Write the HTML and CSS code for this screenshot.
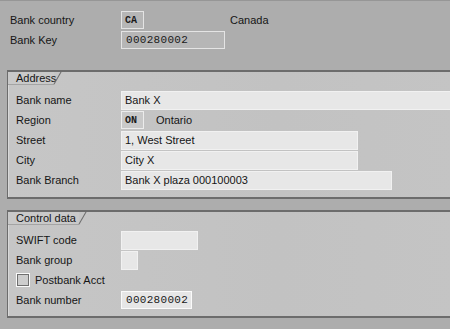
FILE: index.html
```html
<!DOCTYPE html>
<html>
<head>
<meta charset="utf-8">
<link rel="stylesheet" href="styles.css">
</head>
<body>
<div class="screen">
  <div class="header">
    <div class="row">
      <span class="label top-label">Bank country</span>
      <span class="field code dim w-code">CA</span>
      <span class="desc">Canada</span>
    </div>
    <div class="row">
      <span class="label top-label">Bank Key</span>
      <span class="field num dim w-key">000280002</span>
    </div>
  </div>

  <section class="group group-address">
    <div class="tab">Address</div>
    <div class="rows">
      <div class="row">
        <span class="label">Bank name</span>
        <span class="field text w-full">Bank X</span>
      </div>
      <div class="row">
        <span class="label">Region</span>
        <span class="field code mid w-code">ON</span>
        <span class="desc-region">Ontario</span>
      </div>
      <div class="row">
        <span class="label">Street</span>
        <span class="field text w-street">1, West Street</span>
      </div>
      <div class="row">
        <span class="label">City</span>
        <span class="field text w-street">City X</span>
      </div>
      <div class="row">
        <span class="label">Bank Branch</span>
        <span class="field text w-branch">Bank X plaza 000100003</span>
      </div>
    </div>
  </section>

  <section class="group group-control">
    <div class="tab">Control data</div>
    <div class="rows">
      <div class="row">
        <span class="label">SWIFT code</span>
        <span class="field text w-swift"></span>
      </div>
      <div class="row">
        <span class="label">Bank group</span>
        <span class="field text w-group"></span>
      </div>
      <div class="row">
        <span class="check"></span>
        <span class="check-label">Postbank Acct</span>
      </div>
      <div class="row">
        <span class="label">Bank number</span>
        <span class="field num bright w-num">000280002</span>
      </div>
    </div>
  </section>
</div>
</body>
</html>
```

FILE: styles.css
```css
* { box-sizing: border-box; }

html, body {
  margin: 0;
  padding: 0;
}

body {
  width: 450px;
  height: 329px;
  overflow: hidden;
  background: #adadad;
  font-family: "Liberation Sans", Arial, sans-serif;
  font-size: 11px;
  color: #151515;
}

.screen {
  border-top: 1px solid #969696;
  height: 329px;
}

.header {
  padding: 9px 0 0 10px;
}

.row {
  display: flex;
  align-items: center;
  height: 20px;
}

.label {
  width: 105px;
  flex: none;
}

.top-label {
  width: 111px;
}

.field {
  flex: none;
  height: 19px;
  display: flex;
  align-items: center;
  padding-left: 3px;
  white-space: nowrap;
  overflow: hidden;
}

.field.dim {
  height: 18px;
  background: #b6b6b6;
  border: 1px solid #e4e4e4;
}

.field.mid {
  height: 18px;
  background: #c9c9c9;
  border: 1px solid #ececec;
}

.field.text {
  background: #e7e7e7;
  border: 1px solid #f1f1f1;
}

.field.bright {
  height: 18px;
  background: #e6e6e6;
  border: 1px solid #fafafa;
}

.code {
  font-family: "Liberation Mono", "Courier New", monospace;
  font-weight: bold;
  font-size: 10px;
  color: #1a1a1a;
}

.num {
  font-family: "Liberation Mono", "Courier New", monospace;
  font-size: 11px;
  letter-spacing: 0.3px;
  color: #1a1a1a;
  padding-left: 4px;
}

.w-code { width: 23px; }
.w-key { width: 104px; }
.w-full { width: 340px; }
.w-street { width: 237px; }
.w-branch { width: 271px; }
.w-swift { width: 77px; }
.w-group { width: 17px; }
.w-num { width: 71px; }

.desc {
  margin-left: 86px;
}

.desc-region {
  margin-left: 12px;
}

.group {
  margin-left: 7px;
  margin-right: -10px;
  border: 1px solid #6c6c6c;
  border-top-width: 2px;
  border-bottom-width: 2px;
  background: linear-gradient(90deg, #c6c6c6 0%, #c2c2c2 60%, #c4c4c4 100%);
  box-shadow: inset 1px 0 0 #d8d8d8;
}

.group-address {
  margin-top: 20px;
  padding-bottom: 7px;
}

.group-control {
  margin-top: 11px;
  padding-bottom: 6px;
}

.tab {
  position: relative;
  display: inline-block;
  height: 13px;
  line-height: 12px;
  padding: 0 0 0 8px;
  border-bottom: 1px solid #a4a4a4;
  background: #c9c9c9;
}

.group-address .tab { width: 46px; }
.group-control .tab { width: 71px; }

.tab::after {
  content: "";
  position: absolute;
  right: -7px;
  top: -1px;
  width: 15px;
  height: 1px;
  background: #6c6c6c;
  transform-origin: right top;
  transform: rotate(-60deg);
}

.rows {
  padding: 5px 0 0 8px;
}

.check {
  width: 14px;
  height: 14px;
  border: 1px solid #fafafa;
  background: #cdcdcd;
  box-shadow: inset 0 0 0 1px #6f6f6f;
  flex: none;
}

.check-label {
  margin-left: 5px;
}
```
